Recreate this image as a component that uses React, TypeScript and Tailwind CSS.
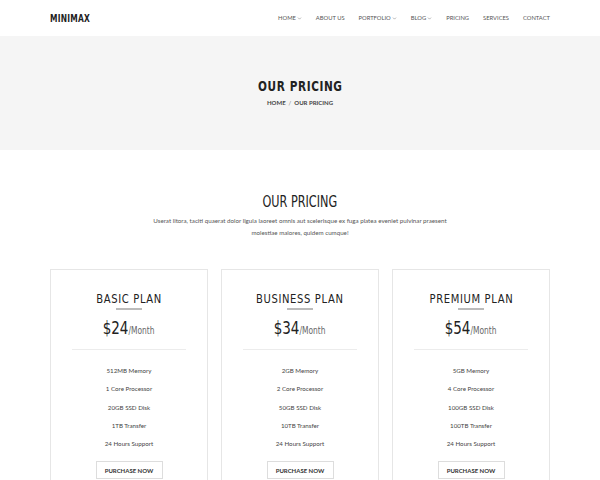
import { ChevronDown } from "lucide-react";

const nav = [
  { label: "HOME", drop: true },
  { label: "ABOUT US", drop: false },
  { label: "PORTFOLIO", drop: true },
  { label: "BLOG", drop: true },
  { label: "PRICING", drop: false },
  { label: "SERVICES", drop: false },
  { label: "CONTACT", drop: false },
];

const plans = [
  {
    name: "BASIC PLAN",
    price: "$24",
    features: ["512MB Memory", "1 Core Processor", "20GB SSD Disk", "1TB Transfer", "24 Hours Support"],
  },
  {
    name: "BUSINESS PLAN",
    price: "$34",
    features: ["2GB Memory", "2 Core Processor", "50GB SSD Disk", "10TB Transfer", "24 Hours Support"],
  },
  {
    name: "PREMIUM PLAN",
    price: "$54",
    features: ["5GB Memory", "4 Core Processor", "100GB SSD Disk", "100TB Transfer", "24 Hours Support"],
  },
];

// no condensed face installed, so squeeze DejaVu horizontally
const heading = "font-['DejaVu_Sans',sans-serif] inline-block";

export default function App() {
  return (
    <div className="w-[600px] h-[480px] overflow-hidden bg-white font-['Lato',sans-serif] text-[#333]">
      <header className="h-9 flex items-center justify-between px-[50px]">
        <div className={`${heading} origin-left scale-x-[0.75] font-bold text-[10px] tracking-[0.3px] text-[#222]`}>MINIMAX</div>
        <nav className="flex items-center gap-[14px] text-[5.8px] text-[#555]">
          {nav.map((n) => (
            <span key={n.label} className="flex items-center gap-[1px]">
              {n.label}
              {n.drop && <ChevronDown className="w-[5px] h-[5px]" strokeWidth={2} />}
            </span>
          ))}
        </nav>
      </header>

      <section className="h-[114px] bg-[#f5f5f5] flex flex-col items-center pt-[41px]">
        <h1 className={`${heading} scale-x-[0.75] font-semibold text-[14px] leading-[18px] tracking-[0.8px] text-[#222]`}>OUR PRICING</h1>
        <div className="mt-[3px] flex items-center gap-[3px] text-[6px] font-bold text-[#444]">
          <span>HOME</span>
          <span className="font-normal text-[#777]">/</span>
          <span>OUR PRICING</span>
        </div>
      </section>

      <section className="px-[50px] pt-[42px]">
        <div className="flex justify-center">
          <h2 className={`${heading} scale-x-[0.75] text-[15px] leading-[20px] text-[#222]`}>OUR PRICING</h2>
        </div>
        <p className="mt-[3px] mx-auto w-[300px] text-center text-[6.2px] leading-[12px] text-[#555]">
          Userat litora, taciti quaerat dolor ligula laoreet omnis aut scelerisque ex fuga platea eveniet pulvinar praesent molestiae maiores, quidem cumque!
        </p>

        <div className="mt-[30px] grid grid-cols-3 gap-[13px]">
          {plans.map((p) => (
            <div key={p.name} className="border border-[#e6e6e6] pt-[21px] px-[21px] pb-6 flex flex-col items-center">
              <h3 className={`${heading} scale-x-[0.8] text-[12.5px] leading-[16px] tracking-[0.8px] text-[#222]`}>{p.name}</h3>
              <div className="mt-[1px] w-[26px] h-[2px] bg-[#bbb]" />
              <div className={`${heading} scale-x-[0.75] mt-[7px] flex items-baseline`}>
                <span className="text-[18px] leading-[22px] text-[#222]">{p.price}</span>
                <span className="text-[10px] text-[#666]">/Month</span>
              </div>
              <div className="mt-[8px] w-full h-px bg-[#ececec]" />
              <ul className="mt-[12px] flex flex-col items-center text-[6.2px] leading-[18.3px] text-[#444]">
                {p.features.map((f) => (
                  <li key={f}>{f}</li>
                ))}
              </ul>
              <button className="mt-[8px] w-[67px] h-[18px] border border-[#ddd] text-[6px] font-bold text-[#333]">
                PURCHASE NOW
              </button>
            </div>
          ))}
        </div>
      </section>
    </div>
  );
}
